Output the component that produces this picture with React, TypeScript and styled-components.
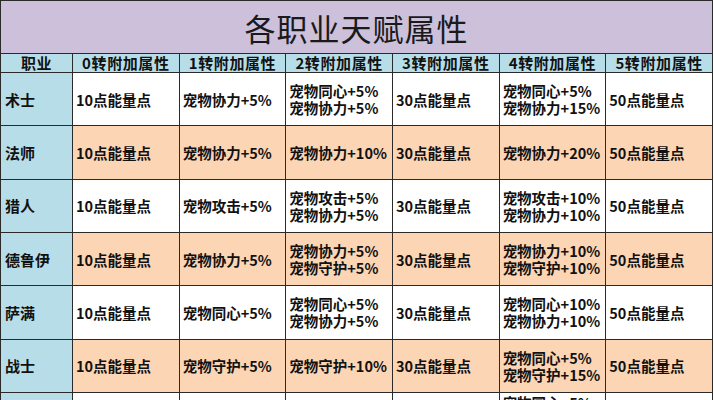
import React from 'react'
import styled, { createGlobalStyle } from 'styled-components'

const GlobalStyle = createGlobalStyle`
  html, body {
    margin: 0;
    padding: 0;
    background: #ffffff;
  }
  body {
    font-family: "Noto Sans CJK SC", "Liberation Sans", sans-serif;
    color: #111;
  }
`

interface Row {
  job: string;
  cells: string[][];
}

const levels = ['0', '1', '2', '3', '4', '5']

const rows: Row[] = [
  { job: '术士', cells: [['10点能量点'], ['宠物协力+5%'], ['宠物同心+5%', '宠物协力+5%'], ['30点能量点'], ['宠物同心+5%', '宠物协力+15%'], ['50点能量点']] },
  { job: '法师', cells: [['10点能量点'], ['宠物协力+5%'], ['宠物协力+10%'], ['30点能量点'], ['宠物协力+20%'], ['50点能量点']] },
  { job: '猎人', cells: [['10点能量点'], ['宠物攻击+5%'], ['宠物攻击+5%', '宠物协力+5%'], ['30点能量点'], ['宠物攻击+10%', '宠物协力+10%'], ['50点能量点']] },
  { job: '德鲁伊', cells: [['10点能量点'], ['宠物协力+5%'], ['宠物协力+5%', '宠物守护+5%'], ['30点能量点'], ['宠物协力+10%', '宠物守护+10%'], ['50点能量点']] },
  { job: '萨满', cells: [['10点能量点'], ['宠物同心+5%'], ['宠物同心+5%', '宠物协力+5%'], ['30点能量点'], ['宠物同心+10%', '宠物协力+10%'], ['50点能量点']] },
  { job: '战士', cells: [['10点能量点'], ['宠物守护+5%'], ['宠物守护+10%'], ['30点能量点'], ['宠物同心+5%', '宠物守护+15%'], ['50点能量点']] },
  { job: '牧师', cells: [['10点能量点'], ['宠物同心+5%'], ['宠物同心+10%'], ['30点能量点'], ['宠物同心+5%', '宠物协力+10%', '宠物守护+5%'], ['50点能量点']] },
]

const App: React.FC = () => {
  return (
    <>
      <GlobalStyle />
      <Sheet>
        <colgroup>
          <col style={{ width: 72 }} />
          {levels.map(l => <col key={l} />)}
        </colgroup>
        <tbody>
          <tr>
            <Title colSpan={7}>各职业天赋属性</Title>
          </tr>
          <tr>
            <Head>职业</Head>
            {levels.map(l => <Head key={l}>{l}转附加属性</Head>)}
          </tr>
          {rows.map((row, i) => (
            <DataRow key={row.job}>
              <Job>{row.job}</Job>
              {row.cells.map((lines, j) => (
                <Cell key={j} $shade={i % 2 === 1}>
                  {lines.map(t => <Line key={t}>{t}</Line>)}
                </Cell>
              ))}
            </DataRow>
          ))}
        </tbody>
      </Sheet>
    </>
  )
}

const Sheet = styled.table`
  width: 713px;
  table-layout: fixed;
  border-collapse: collapse;
  td, th {
    border: 1px solid #2a2a2a;
    padding: 0;
  }
`

const Title = styled.td`
  height: 52px;
  background: #ccc0da;
  text-align: center;
  font-size: 31px;
  font-weight: 400;
  color: #1a1a1a;
  letter-spacing: 1px;
`

const Head = styled.th`
  height: 18px;
  background: #b7dee8;
  font-size: 15px;
  font-weight: 700;
  line-height: 18px;
  text-align: center;
  letter-spacing: 0.6px;
`

const DataRow = styled.tr`
  height: 53.34px;
`

const Job = styled.td`
  background: #b7dee8;
  font-size: 15px;
  font-weight: 700;
  padding-left: 4px !important;
`

const Cell = styled.td<{ $shade: boolean }>`
  background: ${p => (p.$shade ? '#fcd5b4' : '#ffffff')};
  font-size: 14.5px;
  font-weight: 700;
  padding-left: 3px !important;
  white-space: nowrap;
  overflow: hidden;
`

const Line = styled.div`
  line-height: 17px;
`

export default App
